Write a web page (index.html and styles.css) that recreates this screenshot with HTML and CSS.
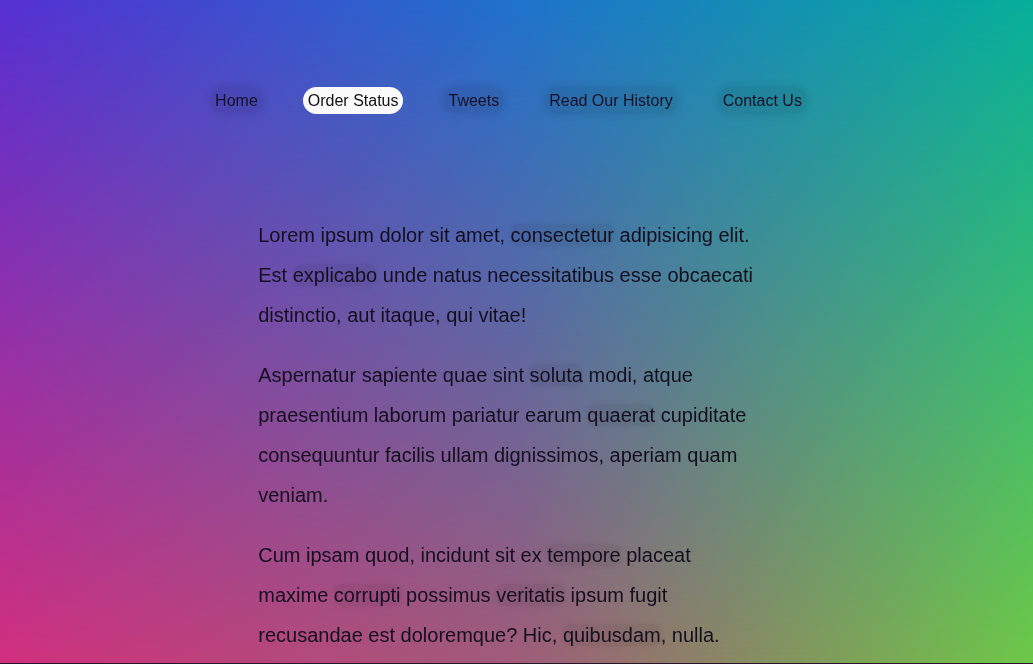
FILE: index.html
```html
<!DOCTYPE html>
<html lang="en">
<head>
<meta charset="utf-8">
<title>Order Status</title>
<link rel="stylesheet" href="styles.css">
</head>
<body>
<div class="page">
  <nav class="nav">
    <a class="nav-link" href="#">Home</a>
    <a class="nav-link active" href="#">Order Status</a>
    <a class="nav-link" href="#">Tweets</a>
    <a class="nav-link" href="#">Read Our History</a>
    <a class="nav-link" href="#">Contact Us</a>
  </nav>
  <main class="content">
    <p>Lorem ipsum dolor sit amet, <span class="hl">consectetur</span> adipisicing elit. Est <span class="hl">explicabo</span> unde natus necessitatibus esse obcaecati distinctio, aut itaque, qui vitae!</p>
    <p>Aspernatur sapiente quae sint <span class="hl">soluta</span> modi, atque praesentium laborum pariatur earum <span class="hl">quaerat</span> cupiditate consequuntur facilis ullam dignissimos, aperiam quam veniam.</p>
    <p>Cum ipsam quod, incidunt sit ex <span class="hl">tempore</span> placeat maxime <span class="hl">corrupti</span> possimus <span class="hl">veritatis</span> ipsum fugit recusandae est doloremque? Hic, <span class="hl">quibusdam</span>, nulla.</p>
  </main>
</div>
</body>
</html>
```

FILE: styles.css
```css
html, body {
  margin: 0;
  padding: 0;
  height: 100%;
  overflow: hidden;
}

body {
  font-family: "Liberation Sans", Arial, sans-serif;
  color: #140f1e;
  background: linear-gradient(to right, #d2307e 0%, #a05c78 50%, #6ec848 100%);
  position: relative;
}

body::before {
  content: "";
  position: fixed;
  inset: 0;
  background: linear-gradient(to right, #5530d2 0%, #1e72cc 50%, #06ae9a 100%);
  -webkit-mask-image: linear-gradient(to bottom, #000 0%, transparent 100%);
  mask-image: linear-gradient(to bottom, #000 0%, transparent 100%);
  z-index: 0;
}

body::after {
  content: "";
  position: fixed;
  left: 0;
  right: 0;
  bottom: 0;
  height: 1px;
  background: #2a1428;
  z-index: 2;
}

.page {
  position: relative;
  z-index: 1;
  padding-top: 87px;
}

.nav {
  display: flex;
  justify-content: center;
  gap: 40px;
  padding-right: 16px;
  margin-bottom: 101px;
}

.nav-link {
  display: block;
  font-size: 16px;
  line-height: 19px;
  padding: 4px 5px;
  border-radius: 14px;
  color: #151025;
  text-decoration: none;
  background: rgba(0, 0, 0, 0.07);
  box-shadow: 0 0 6px 3px rgba(0, 0, 0, 0.06);
}

.nav-link.active {
  background: #fafafa;
  box-shadow: none;
  color: #111;
}

.content {
  box-sizing: border-box;
  width: 50%;
  padding-right: 16px;
  margin: 0 auto;
  font-size: 20px;
  line-height: 40px;
}

.content p {
  margin: 0 0 20px;
}

.hl {
  border-radius: 8px;
  background: rgba(0, 0, 0, 0.05);
  box-shadow: 0 0 5px 1px rgba(0, 0, 0, 0.04);
}
```
